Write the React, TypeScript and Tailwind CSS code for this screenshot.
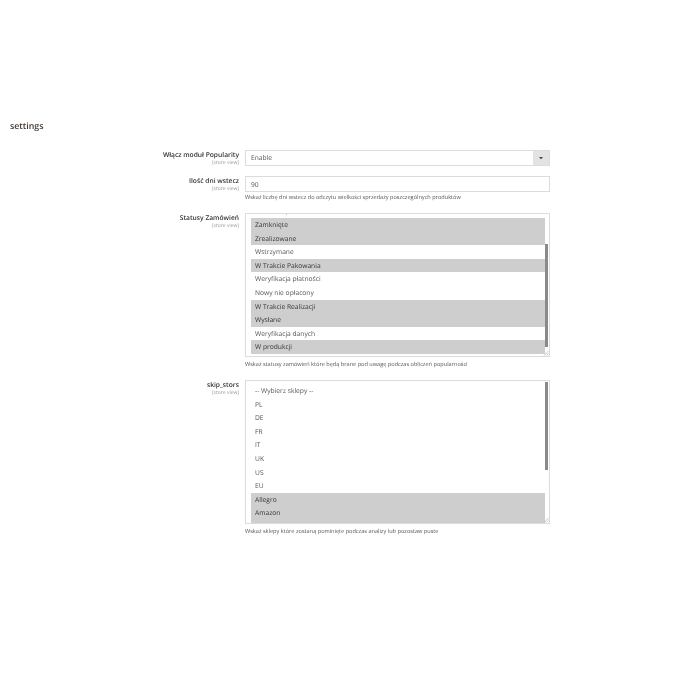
import React from 'react';

interface Option {
  label: string;
  selected?: boolean;
}

const statuses: Option[] = [
  { label: 'Zamknięte', selected: true },
  { label: 'Zrealizowane', selected: true },
  { label: 'Wstrzymane' },
  { label: 'W Trakcie Pakowania', selected: true },
  { label: 'Weryfikacja płatności' },
  { label: 'Nowy nie opłacony' },
  { label: 'W Trakcie Realizacji', selected: true },
  { label: 'Wysłane', selected: true },
  { label: 'Weryfikacja danych' },
  { label: 'W produkcji', selected: true },
];

const stores: Option[] = [
  { label: '-- Wybierz sklepy --' },
  { label: 'PL' },
  { label: 'DE' },
  { label: 'FR' },
  { label: 'IT' },
  { label: 'UK' },
  { label: 'US' },
  { label: 'EU' },
  { label: 'Allegro', selected: true },
  { label: 'Amazon', selected: true },
  { label: '', selected: true },
];

const Label = ({ title }: { title: string }) => (
  <div className="w-[239px] shrink-0 text-right">
    <div className="text-[6.7px] leading-[10px] font-semibold text-[#333]">{title}</div>
    <div className="text-[5px] leading-[6px] text-[#999]">[store view]</div>
  </div>
);

const Help = ({ children }: { children: React.ReactNode }) => (
  <div className="text-[5.6px] leading-[8px] text-[#555]">{children}</div>
);

const ListBox = ({ options, thumb, head }: { options: Option[]; thumb: string; head?: React.ReactNode }) => (
  <div className="relative w-[305px] h-[144px] overflow-hidden border border-[#dcdcdc] bg-white pl-[5px] pr-[4px]">
    {head}
    {options.map((o, i) => (
      <div
        key={i}
        className={`h-[13.6px] pl-[4px] text-[6.7px] leading-[13.6px] ${o.selected ? 'bg-[#cecece] text-[#333]' : 'text-[#555]'}`}
      >
        {o.label}
      </div>
    ))}
    <div className={`absolute right-[1px] w-[3px] bg-[#8a8a8a] ${thumb}`} />
    <svg className="absolute right-[0px] bottom-[0px]" width="6" height="6" viewBox="0 0 6 6">
      <path d="M1 5.5 L5.5 1 M3.5 5.5 L5.5 3.5" stroke="#999" strokeWidth="0.6" />
    </svg>
  </div>
);

export default function App() {
  return (
    <div className="w-[700px] h-[700px] bg-white pt-[120px] font-['Open_Sans',sans-serif] [text-rendering:geometricPrecision] blur-[0.3px]">
      <div className="pl-[10px] text-[8.8px] leading-[12px] font-semibold text-[#41362f]">settings</div>

      <div className="mt-[18px] flex gap-[6px]">
        <Label title="Włącz moduł Popularity" />
        <div className="flex w-[305px] h-[16px] border border-[#dcdcdc] bg-white">
          <div className="flex-1 pl-[5px] text-[6.7px] leading-[14px] text-[#555]">Enable</div>
          <div className="flex w-[16px] items-center justify-center bg-[#e3e3e3]">
            <svg width="4" height="2.5" viewBox="0 0 5 3">
              <path d="M0 0 H5 L2.5 3 Z" fill="#514943" />
            </svg>
          </div>
        </div>
      </div>

      <div className="mt-[10px] flex gap-[6px]">
        <Label title="Ilość dni wstecz" />
        <div>
          <div className="w-[305px] h-[16px] border border-[#dcdcdc] bg-white pl-[5px] text-[6.7px] leading-[15px] text-[#555]">
            90
          </div>
          <div className="mt-[1px]">
            <Help>Wskaż liczbę dni wstecz do odczytu wielkości sprzedaży poszczególnych produktów</Help>
          </div>
        </div>
      </div>

      <div className="mt-[12px] flex gap-[6px]">
        <Label title="Statusy Zamówień" />
        <div>
          <ListBox
            options={statuses}
            thumb="top-[30px] h-[103px]"
            head={
              <div className="h-[4px] pl-[35px]">
                <div className="w-[1px] h-[1px] bg-[#bbb]" />
              </div>
            }
          />
          <div className="mt-[3px]">
            <Help>Wskaż statusy zamówień które będą brane pod uwagę podczas obliczeń popularności</Help>
          </div>
        </div>
      </div>

      <div className="mt-[12px] flex gap-[6px]">
        <Label title="skip_stors" />
        <div>
          <ListBox options={stores} thumb="top-[1px] h-[88px]" head={<div className="h-[3px]" />} />
          <div className="mt-[3px]">
            <Help>Wskaż sklepy które zostaną pominięte podczas analizy lub pozostaw puste</Help>
          </div>
        </div>
      </div>
    </div>
  );
}
